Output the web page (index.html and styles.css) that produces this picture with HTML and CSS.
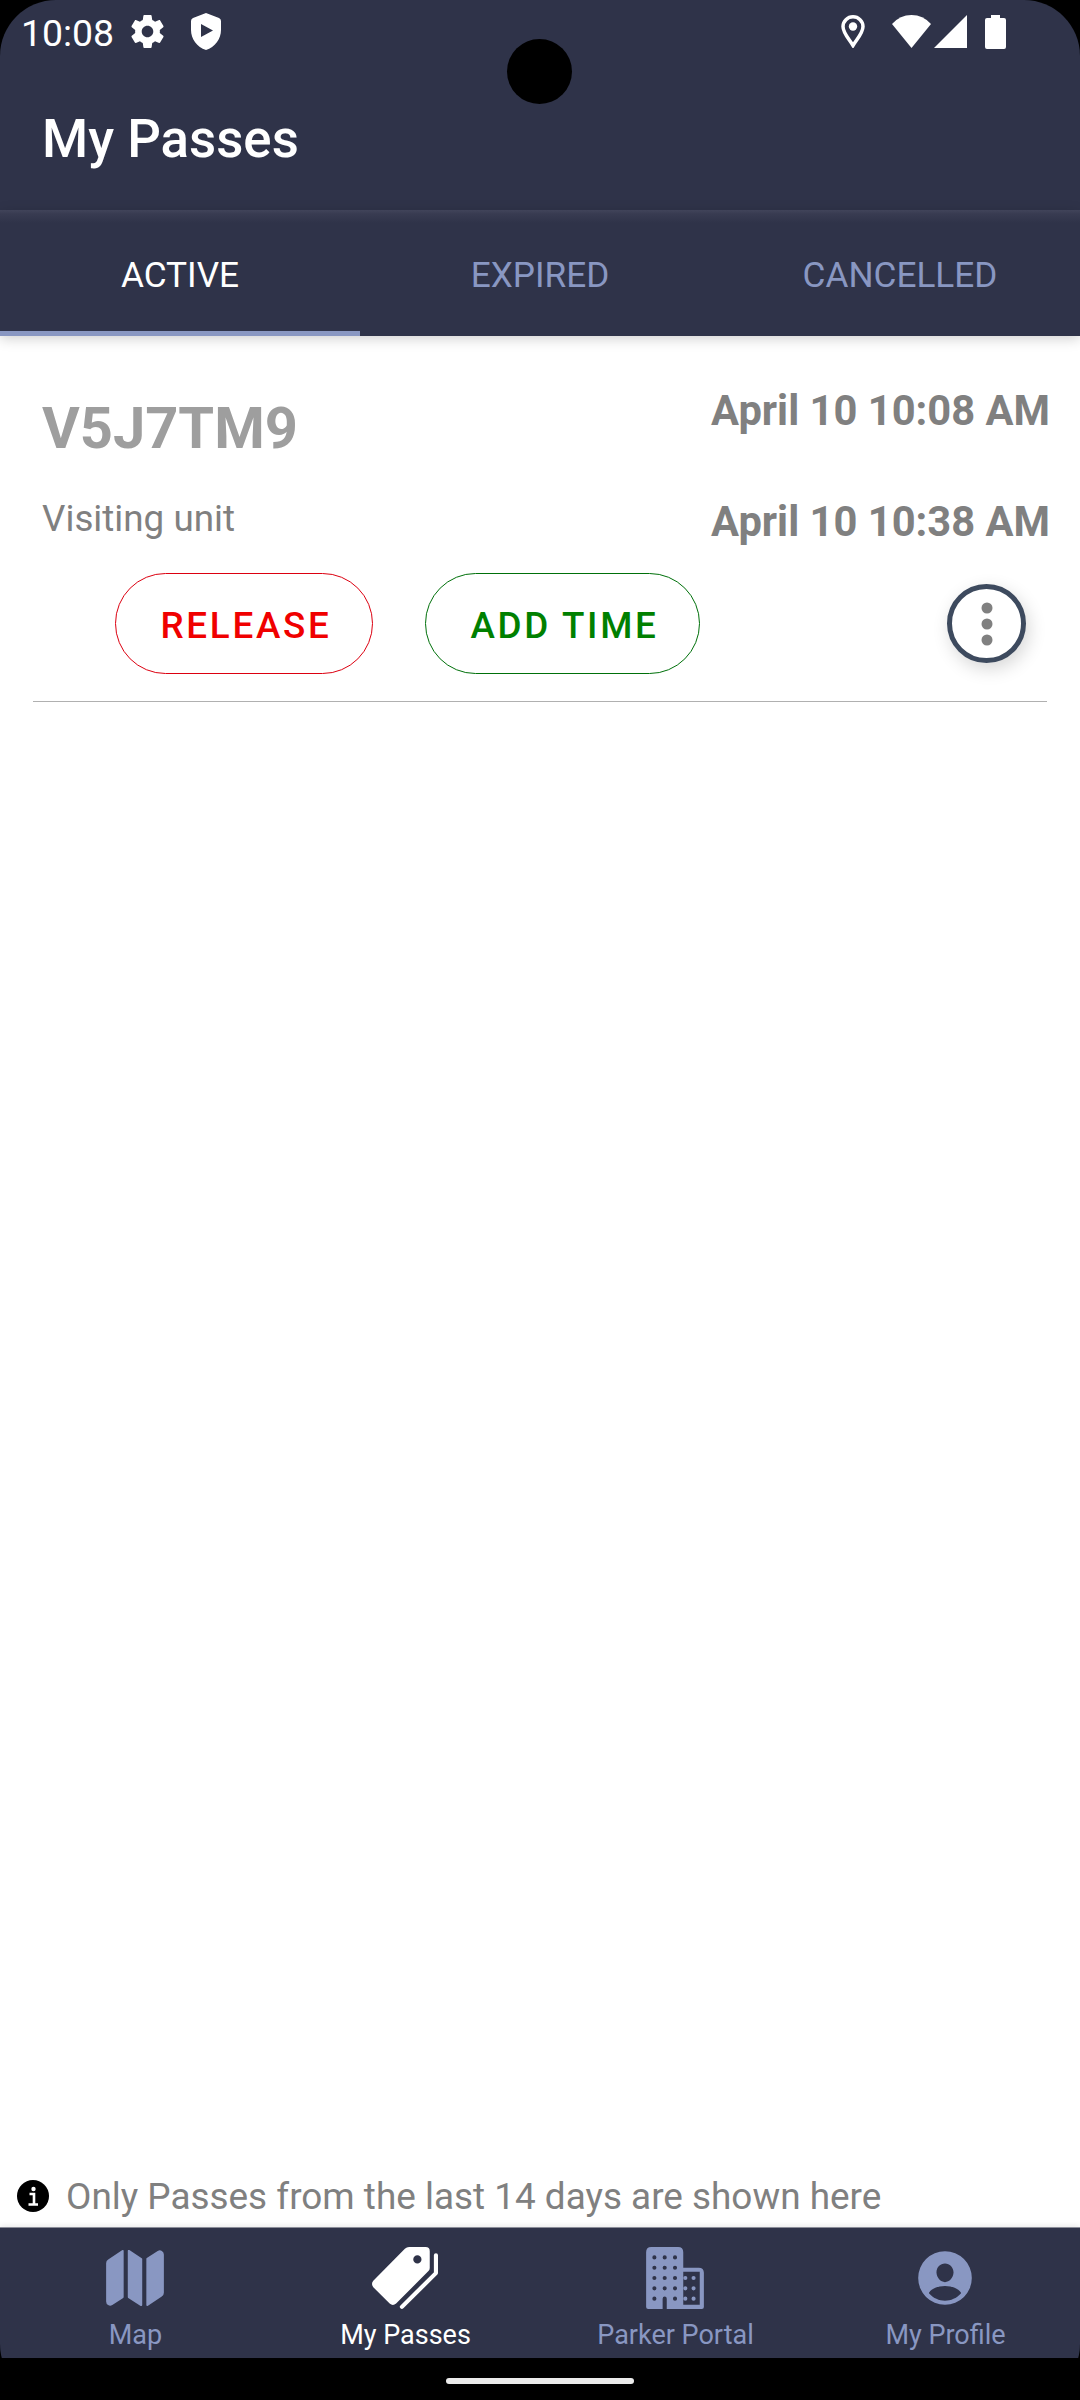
FILE: index.html
```html
<!DOCTYPE html>
<html lang="en">
<head>
    <meta charset="UTF-8">
    <meta name="viewport" content="width=device-width, initial-scale=1.0">
    <title>My Passes</title>
    <link rel="stylesheet" href="styles.css">
</head>
<body>
    <div class="screen">
        <div class="camera"></div>

        <div class="status-bar">
            <span class="time">10:08</span>
            <svg class="icon-gear" viewBox="2 2 20 20"><path d="M19.43 12.98c.04-.32.07-.64.07-.98s-.03-.66-.07-.98l2.11-1.65c.19-.15.24-.42.12-.64l-2-3.46c-.12-.22-.39-.3-.61-.22l-2.49 1c-.52-.4-1.08-.73-1.69-.98l-.38-2.65C14.46 2.18 14.25 2 14 2h-4c-.25 0-.46.18-.49.42l-.38 2.65c-.61.25-1.17.59-1.69.98l-2.49-1c-.23-.09-.49 0-.61.22l-2 3.46c-.13.22-.07.49.12.64l2.11 1.65c-.04.32-.07.65-.07.98s.03.66.07.98l-2.11 1.65c-.19.15-.24.42-.12.64l2 3.46c.12.22.39.3.61.22l2.49-1c.52.4 1.08.73 1.69.98l.38 2.65c.03.24.24.42.49.42h4c.25 0 .46-.18.49-.42l.38-2.65c.61-.25 1.17-.59 1.69-.98l2.49 1c.23.09.49 0 .61-.22l2-3.46c.12-.22.07-.49-.12-.64l-2.11-1.65zM12 15.5c-1.93 0-3.5-1.57-3.5-3.5s1.57-3.5 3.5-3.5 3.5 1.57 3.5 3.5-1.57 3.5-3.5 3.5z"/></svg>
            <svg class="icon-shield" viewBox="0 0 30 37"><path fill-rule="evenodd" d="M15 0l13 5q2 .8 2 3v9c0 9-6 17-15 20C6 34 0 26 0 17V8q0-2.200 2-3zM10 11v13l12-6.500z"/></svg>
            <div class="status-right">
                <svg class="icon-pin" viewBox="0 0 24 33"><path class="pin-line" d="M12 30.500C8 24 2 18 2 11.500a10 9.700 0 0 1 20 0C22 18 16 24 12 30.500z"/><circle cx="12" cy="11.500" r="4.200"/></svg>
                <svg class="icon-wifi" viewBox="0 0 39 33"><path d="M19.500 33L0 9Q8 0 19.500 0T39 9z"/></svg>
                <svg class="icon-signal" viewBox="0 0 33 33"><path d="M33 0v33H0z"/></svg>
                <svg class="icon-battery" viewBox="0 0 21 34"><path d="M6 0h9v3h4q2 0 2 2v27q0 2-2 2H2q-2 0-2-2V5q0-2 2-2h4z"/></svg>
            </div>
        </div>

        <header class="header">
            <h1>My Passes</h1>
        </header>

        <div class="tabs">
            <a class="tab active">ACTIVE</a>
            <a class="tab">EXPIRED</a>
            <a class="tab">CANCELLED</a>
        </div>

        <main class="content">
            <div class="pass">
                <div class="pass-info">
                    <div class="pass-left">
                        <div class="plate">V5J7TM9</div>
                        <div class="visiting">Visiting unit</div>
                    </div>
                    <div class="pass-dates">
                        <div>April 10 10:08 AM</div>
                        <div>April 10 10:38 AM</div>
                    </div>
                </div>
                <div class="pass-actions">
                    <button class="btn release">RELEASE</button>
                    <button class="btn add-time">ADD TIME</button>
                    <button class="more">
                        <svg viewBox="0 0 12 44"><circle cx="6" cy="6" r="5.500"/><circle cx="6" cy="22" r="5.500"/><circle cx="6" cy="38" r="5.500"/></svg>
                    </button>
                </div>
            </div>
        </main>

        <div class="note">
            <svg viewBox="0 0 32 32"><circle cx="16" cy="16" r="16"/><circle class="info-mark" cx="16.500" cy="9" r="2.200"/><path class="info-line" d="M12.500 14H17v10.500M11.500 24.500h9.500"/></svg>
            <span>Only Passes from the last 14 days are shown here</span>
        </div>

        <nav class="bottom-nav">
            <a class="nav-item">
                <svg viewBox="0 0 512 512"><path d="M48.170 113.340A32 32 0 0 0 32 141.240V438a32 32 0 0 0 47 28.370c.43-.23.85-.47 1.260-.74l84.140-55.050a8 8 0 0 0 3.630-6.720V46.450a8 8 0 0 0-12.510-6.630zM212.360 39.310A8 8 0 0 0 200 46v357.560a8 8 0 0 0 3.630 6.720l96 62.420A8 8 0 0 0 312 466V108.670a8 8 0 0 0-3.640-6.730zM464.530 46.470a31.640 31.640 0 0 0-31.500-.88 12.070 12.070 0 0 0-1.250.74l-84.150 55a8 8 0 0 0-3.630 6.720v357.460a8 8 0 0 0 12.520 6.630l107.070-73.460a32 32 0 0 0 16.410-28v-296a32.760 32.760 0 0 0-15.470-28.210z"/></svg>
                <span>Map</span>
            </a>
            <a class="nav-item active">
                <svg viewBox="0 0 512 512"><path fill-rule="evenodd" d="M288 16H416q32 0 32 32V178q0 14-10 24L187 454q-25 22-50 0L10 327q-20-25 0-50L255 30q14-14 33-14zM352 80a32 32 0 1 0 0 64 32 32 0 0 0 0-64z"/><path class="tag-line" d="M496 80V218L232 480"/></svg>
                <span>My Passes</span>
            </a>
            <a class="nav-item">
                <svg viewBox="0 0 512 512">
                    <path fill-rule="evenodd" d="M72 16H280q40 0 40 40V176H440q40 0 40 40V480q0 16-16 16H192V416q0-16-16-16t-16 16V496H48q-16 0-16-16V56q0-40 40-40zM320 208V464H448V208z"/>
                    <path class="windows" d="M96 96h0M176 96h0M256 96h0M96 176h0M176 176h0M256 176h0M96 256h0M176 256h0M256 256h0M96 336h0M176 336h0M256 336h0M96 416h0M256 416h0"/>
                    <path class="windows-side" d="M336 256h0M400 256h0M336 336h0M400 336h0M336 416h0M400 416h0"/>
                </svg>
                <span>Parker Portal</span>
            </a>
            <a class="nav-item">
                <svg viewBox="0 0 512 512"><path fill-rule="evenodd" d="M256 48a208 208 0 1 0 0 416 208 208 0 0 0 0-416zM256 144c38 0 68 33 66 72-2 38-32 72-66 72s-64-34-66-72c-2-40 28-72 66-72zM256 433c-46 0-90-20-121-54-3-3-4-7-2-11 22-31 71-50 123-50s101 19 123 50c2 4 1 8-2 11-31 34-75 54-121 54z"/></svg>
                <span>My Profile</span>
            </a>
        </nav>

        <div class="home-bar">
            <div class="handle"></div>
        </div>
    </div>
</body>
</html>
```
FILE: styles.css
```css
* {
    box-sizing: border-box;
}

body {
    margin: 0;
    background-color: #000;
    font-family: Roboto, sans-serif;
}

.screen {
    position: relative;
    width: 1080px;
    height: 2400px;
    display: flex;
    flex-direction: column;
    border-radius: 56px;
    overflow: hidden;
}

.camera {
    position: absolute;
    top: 39px;
    left: 507px;
    width: 65px;
    height: 65px;
    border-radius: 50%;
    background-color: #000;
}

/* status bar */
.status-bar {
    height: 63px;
    flex-shrink: 0;
    display: flex;
    align-items: center;
    padding: 0 74px 0 21px;
    background-color: #2f3349;
    color: #fff;
    fill: #fff;
}

.time {
    width: 110px;
    font-size: 37.4px;
    line-height: 64px;
    padding-top: 3px;
}

.icon-gear {
    width: 33px;
    height: 33px;
}

.icon-shield {
    width: 30px;
    height: 37px;
    margin-left: 27px;
}

.status-right {
    margin-left: auto;
    display: flex;
    align-items: center;
}

.icon-pin {
    width: 24px;
    height: 33px;
    margin-right: 27px;
}

.pin-line {
    fill: none;
    stroke: #fff;
    stroke-width: 3.5;
}

.icon-wifi {
    width: 39px;
    height: 33px;
    margin-right: 3px;
}

.icon-signal {
    width: 33px;
    height: 33px;
    margin-right: 18px;
}

.icon-battery {
    width: 21px;
    height: 34px;
}

/* header */
.header {
    height: 147px;
    flex-shrink: 0;
    padding: 40px 42px 0;
    background-color: #2f3349;
}

h1 {
    margin: 0;
    color: #fff;
    font-size: 52.8px;
    font-weight: 500;
    line-height: 72px;
}

.tabs {
    position: relative;
    height: 126px;
    flex-shrink: 0;
    display: flex;
    background: linear-gradient(#41445a 0, #383b51 4px, #2f3349 13px);
    box-shadow: 0 3px 12px rgba(0, 0, 0, 0.18);
}

.tab {
    flex: 1;
    padding-top: 2px;
    border-bottom: 5px solid transparent;
    color: #8997c2;
    font-size: 35.2px;
    line-height: 126px;
    text-align: center;
}

.tab.active {
    color: #fff;
    border-color: #8997c2;
}

/* pass list */
.content {
    flex: 1;
    padding: 0 33px;
    background-color: #fff;
}

.pass {
    height: 366px;
    border-bottom: 1px solid #b0b0b0;
}

.pass-info {
    height: 237px;
    display: flex;
    justify-content: space-between;
    padding-left: 9px;
}

.plate {
    margin-top: 56px;
    color: #9e9e9e;
    font-size: 57.8px;
    font-weight: bold;
    line-height: 72px;
}

.visiting {
    margin-top: 30px;
    color: #808080;
    font-size: 36.8px;
    line-height: 50px;
}

.pass-dates {
    padding-top: 45px;
    margin-right: -3px;
    color: #808080;
    font-size: 41.7px;
    font-weight: bold;
    line-height: 60px;
    text-align: right;
}

.pass-dates div + div {
    margin-top: 51px;
}

.pass-actions {
    display: flex;
    align-items: center;
    padding: 0 21px 0 82px;
}

.btn {
    height: 101px;
    padding: 3px 0 0 4px;
    border-radius: 51px;
    background: none;
    font-family: inherit;
    font-size: 36.8px;
    font-weight: 500;
    letter-spacing: 2.7px;
}

.release {
    width: 258px;
    border: 1px solid #dc0010;
    color: #f00000;
}

.add-time {
    width: 275px;
    margin-left: 52px;
    border: 1px solid #00700a;
    color: #008000;
}

.more {
    width: 79px;
    height: 79px;
    margin-left: auto;
    padding: 0;
    display: flex;
    align-items: center;
    justify-content: center;
    background-color: #fff;
    border: 5px solid #3d4a5e;
    border-radius: 50%;
    box-shadow: 3px 6px 18px rgba(0, 0, 0, 0.16);
}

.more svg {
    width: 12px;
    height: 44px;
    fill: #808080;
}

/* note above the navigation */
.note {
    height: 61px;
    flex-shrink: 0;
    display: flex;
    align-items: center;
    gap: 17px;
    padding: 1px 0 0 17px;
    background-color: #fff;
    color: #808080;
    font-size: 36.9px;
    line-height: 60px;
}

.note svg {
    width: 32px;
    height: 32px;
    margin-bottom: 3px;
    fill: #000;
}

.note .info-mark {
    fill: #fff;
}

.info-line {
    fill: none;
    stroke: #fff;
    stroke-width: 2.6;
}

/* bottom navigation */
.bottom-nav {
    height: 131px;
    flex-shrink: 0;
    display: flex;
    padding-top: 17px;
    background-color: #2f3349;
    border-top: 1px solid #8a8c98;
    box-shadow: 0 -1px 6px rgba(0, 0, 0, 0.1);
}

.nav-item {
    flex: 1;
    display: flex;
    flex-direction: column;
    align-items: center;
    color: #8997c2;
    font-size: 27px;
    line-height: 32px;
}

.nav-item.active {
    color: #fff;
}

.nav-item svg {
    width: 66px;
    height: 66px;
    margin-bottom: 8px;
    fill: currentColor;
}

.nav-item span {
    padding-left: 1px;
}

.tag-line {
    fill: none;
    stroke: currentColor;
    stroke-width: 32;
    stroke-linecap: round;
    stroke-linejoin: round;
}

.windows,
.windows-side {
    fill: none;
    stroke: #2f3349;
    stroke-width: 32;
    stroke-linecap: round;
}

.windows-side {
    stroke: currentColor;
}

.home-bar {
    height: 42px;
    flex-shrink: 0;
    padding-top: 20px;
    background-color: #000;
}

.handle {
    width: 188px;
    height: 6px;
    margin: 0 auto;
    border-radius: 3px;
    background-color: #ebebeb;
}
```
